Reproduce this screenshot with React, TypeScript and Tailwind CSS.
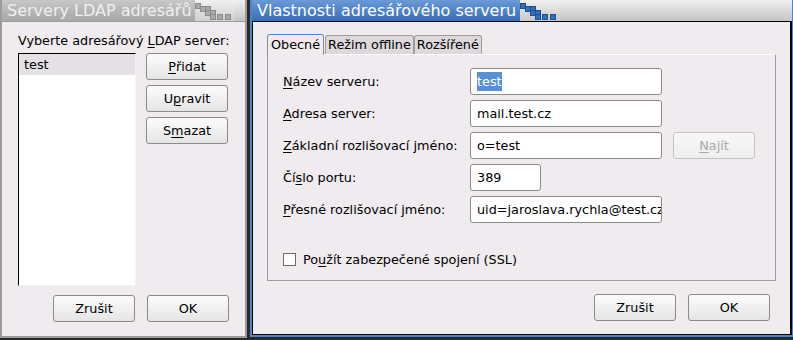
import React from "react";

const U = ({ children }: { children: React.ReactNode }) => (
  <span className="underline underline-offset-2 decoration-1">{children}</span>
);

function Decor({ active }: { active: boolean }) {
  const fill = active ? "#2f6fc0" : "#a8a8a8";
  const stroke = active ? "#1d4f90" : "#8c8c8c";
  const sq = [
    [0, 2], [5, 5], [10, 5], [10, 9], [15, 9], [15, 13], [22, 13], [30, 13],
  ];
  return (
    <svg width="40" height="20" viewBox="0 0 40 20" className="shrink-0">
      {sq.map(([x, y], i) => (
        <rect key={i} x={x + 0.5} y={y + 0.5} width="5" height="5" fill={fill} stroke={stroke} strokeWidth="1" />
      ))}
    </svg>
  );
}

function TitleBar({ title, active, leftW }: { title: string; active: boolean; leftW: number }) {
  return (
    <div className="h-[21px] flex items-stretch shrink-0">
      <div
        className={
          "flex items-center pl-[5px] text-[16px] leading-none whitespace-nowrap overflow-hidden " +
          (active
            ? "bg-gradient-to-b from-[#6d9ad6] via-[#4f82c8] to-[#3a6db5] text-white"
            : "bg-gradient-to-b from-[#c8c8c8] via-[#b6b6b6] to-[#a8a8a8] text-[#f0f0f0]")
        }
        style={{ width: leftW }}
      >
        {title}
      </div>
      <div className={"flex items-center " + (active ? "bg-gradient-to-b from-[#f0f0f0] to-[#c8c8c8]" : "bg-gradient-to-b from-[#f0f0f0] to-[#cfcfcf]")}>
        <Decor active={active} />
      </div>
      <div className="flex-1 bg-gradient-to-b from-[#f0f0f0] to-[#c4c4c4]" />
    </div>
  );
}

function Btn({ children, w = 82, disabled = false }: { children: React.ReactNode; w?: number; disabled?: boolean }) {
  return (
    <div
      className={
        "h-[27px] rounded-[3px] border flex items-center justify-center " +
        (disabled
          ? "border-[#c4c4c4] bg-gradient-to-b from-[#f8f8f8] to-[#eeeeee] text-[#a8a8a8]"
          : "border-[#8a8a8a] bg-gradient-to-b from-[#fcfcfc] to-[#e6e4e6] text-black")
      }
      style={{ width: w }}
    >
      {children}
    </div>
  );
}

function Field({ children, w = 192 }: { children?: React.ReactNode; w?: number }) {
  return (
    <div
      className="h-[27px] rounded-[3px] border border-[#8a8a8a] bg-white flex items-center px-[6px] overflow-hidden whitespace-nowrap"
      style={{ width: w }}
    >
      {children}
    </div>
  );
}

export default function App() {
  return (
    <div
      className="w-[793px] h-[340px] flex bg-[#2a2a2a] text-[12.8px] text-black overflow-hidden"
      style={{ fontFamily: '"DejaVu Sans", sans-serif' }}
    >
      {/* Left window */}
      <div className="w-[247px] h-[338px] flex flex-col border-l-[2px] border-r-[2px] border-b-[2px] border-[#9c9c9c] bg-[#efebef]">
        <TitleBar title="Servery LDAP adresářů" active={false} leftW={193} />
        <div className="flex-1 flex flex-col border-t border-[#9c9c9c] pl-[16px] pr-[16px]">
          <div className="mt-[11px] h-[16px] leading-[16px] whitespace-nowrap">
            Vyberte adresářový <U>L</U>DAP server:
          </div>
          <div className="mt-[4px] flex">
            <div className="w-[118px] h-[233px] bg-white border-t border-l border-black border-r border-b border-r-[#f4f4f4] border-b-[#f4f4f4] flex flex-col">
              <div className="h-[21px] bg-[#e4e0e4] pl-[5px] leading-[21px]">test</div>
            </div>
            <div className="ml-[10px] flex flex-col gap-[5px]">
              <Btn><U>P</U>řidat</Btn>
              <Btn>U<U>p</U>ravit</Btn>
              <Btn>S<U>m</U>azat</Btn>
            </div>
          </div>
          <div className="mt-[9px] flex justify-end gap-[12px]">
            <Btn>Zrušit</Btn>
            <Btn>OK</Btn>
          </div>
        </div>
      </div>

      <div className="w-[3px] h-full bg-[#2a2a2a]" />

      {/* Right window */}
      <div className="flex-1 h-[337px] flex flex-col border-l-[2px] border-r-[1px] border-b-[2px] border-[#4a86d0] bg-[#efebef]">
        <TitleBar title="Vlastnosti adresářového serveru" active={true} leftW={268} />
        <div className="flex-1 flex flex-col border-t border-l border-b border-r-[2px] border-black px-[14px]">
          {/* Tabs */}
          <div className="mt-[12px] h-[20px] flex items-end">
            <div className="h-[21px] px-[3px] bg-[#efebef] border border-b-0 border-[#8c8c8c] border-t-[#4a86d0] rounded-t-[3px] flex items-center relative z-10 -mb-px">
              Obecné
            </div>
            <div className="h-[19px] px-[2px] bg-[#dcd8dc] border border-b-0 border-[#9c9c9c] rounded-t-[3px] flex items-center ml-[1px]">
              Režim offline
            </div>
            <div className="h-[19px] px-[2px] bg-[#dcd8dc] border border-b-0 border-[#9c9c9c] rounded-t-[3px] flex items-center">
              Rozšířené
            </div>
          </div>
          <div className="h-[227px] border border-[#9c9c9c] border-t-white flex flex-col pl-[15px] pt-[13px]">
            <div className="flex items-center h-[27px]">
              <div className="w-[187px]"><U>N</U>ázev serveru:</div>
              <Field><span className="bg-[#5a8fd3] text-white">test</span></Field>
            </div>
            <div className="flex items-center h-[27px] mt-[5px]">
              <div className="w-[187px]"><U>A</U>dresa server:</div>
              <Field>mail.test.cz</Field>
            </div>
            <div className="flex items-center h-[27px] mt-[5px]">
              <div className="w-[187px] whitespace-nowrap"><U>Z</U>ákladní rozlišovací jméno:</div>
              <Field>o=test</Field>
              <div className="ml-[11px]"><Btn disabled><U>N</U>ajít</Btn></div>
            </div>
            <div className="flex items-center h-[27px] mt-[5px]">
              <div className="w-[187px]">Čí<U>s</U>lo portu:</div>
              <Field w={71}>389</Field>
            </div>
            <div className="flex items-center h-[27px] mt-[5px]">
              <div className="w-[187px] whitespace-nowrap"><U>P</U>řesné rozlišovací jméno:</div>
              <Field>uid=jaroslava.rychla@test.cz</Field>
            </div>
            <div className="flex items-center mt-[27px]">
              <div className="w-[13px] h-[13px] border border-[#6c6c6c] bg-white" />
              <div className="ml-[7px]">Po<U>u</U>žít zabezpečené spojení (SSL)</div>
            </div>
          </div>
          <div className="mt-[13px] flex justify-end gap-[12px] pr-[6px]">
            <Btn>Zrušit</Btn>
            <Btn>OK</Btn>
          </div>
        </div>
      </div>
    </div>
  );
}
